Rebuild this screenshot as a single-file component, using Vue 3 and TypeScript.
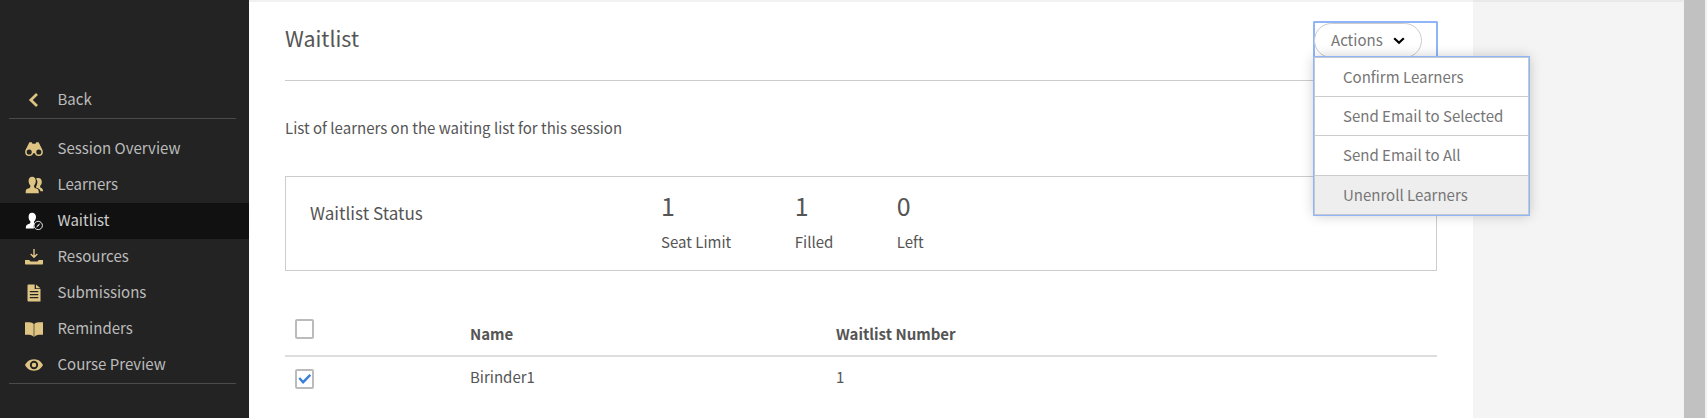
<script setup lang="ts">
import { ref } from 'vue'

interface NavItem {
  label: string
  icon: string
}

const navItems: NavItem[] = [
  { label: 'Session Overview', icon: 'binoculars' },
  { label: 'Learners', icon: 'users' },
  { label: 'Waitlist', icon: 'waiting' },
  { label: 'Resources', icon: 'download' },
  { label: 'Submissions', icon: 'document' },
  { label: 'Reminders', icon: 'book' },
  { label: 'Course Preview', icon: 'eye' },
]
const active = ref('Waitlist')

const stats = [
  { label: 'Seat Limit', value: 1 },
  { label: 'Filled', value: 1 },
  { label: 'Left', value: 0 },
]

const actions = ['Confirm Learners', 'Send Email to Selected', 'Send Email to All', 'Unenroll Learners']
const hovered = ref('Unenroll Learners')

const learners = ref([{ name: 'Birinder1', number: 1, selected: true }])
</script>

<template>
  <div class="page">
    <nav class="sidebar">
      <a class="nav-row back">
        <svg class="icon" viewBox="0 0 18 18"><path d="M12 3 5.800 9l6.200 6" fill="none" stroke="currentColor" stroke-width="2.700" /></svg>
        <span>Back</span>
      </a>
      <div class="nav-list">
        <a
          v-for="item in navItems"
          :key="item.label"
          class="nav-row"
          :class="{ active: item.label === active }"
          @click="active = item.label"
        >
          <svg class="icon" viewBox="0 0 18 18" fill="currentColor">
            <g v-if="item.icon === 'binoculars'">
              <path d="M4.400 2.200h2.300l.8 1.600h3l.8-1.600h2.300l1 2 2.600 5.400-3 .4-2.600 1.600-1.200 1.600h-2.800l-1.200-1.600L3.800 10l-3-.4 2.600-5.400z" />
              <circle cx="4.200" cy="12" r="3.300" fill="#232323" stroke="currentColor" stroke-width="1.500" />
              <circle cx="13.800" cy="12" r="3.300" fill="#232323" stroke="currentColor" stroke-width="1.500" />
            </g>
            <g v-else-if="item.icon === 'users'">
              <path d="M7.200.8c2.400 0 3.600 1.700 3.600 4 0 2.200-.7 3.500-1.700 4.600-.4 2 .5 2.500 2.400 3.200 1.700.6 2.300 1.300 2.300 4.600H.7c0-3.300.6-4 2.300-4.600 1.900-.7 2.700-1.200 2.300-3.200-1-1.100-1.700-2.400-1.700-4.600 0-2.300 1.200-4 3.600-4z" />
              <path d="M11 2.500c3.700-1.200 5.800.3 5.800 3.400 0 1.700-.6 2.800-1.600 3.800-.3 1.500.4 2 1.500 2.500.9.4 1.300 1.300 1.300 3h-2.500c-.4-1.800-1.500-2.700-4.500-3.700 0-1 .2-1.300.6-2 1.100-2.200 1.300-4.800-.6-7z" />
            </g>
            <g v-else-if="item.icon === 'waiting'">
              <path d="M7 .8c2.500 0 4 1.700 4 4.200 0 2.100-.8 3.400-1.900 4.500-.3 1.300 0 1.700.4 2.100-1 1.400-1 3.200-.5 5H.8c0-3 .7-3.800 2.300-4.400 2-.7 2.700-1.100 2.200-3C4.200 8.100 3.600 6.900 3.600 4.900 3.600 2.400 4.800.8 7 .8z" />
              <circle cx="13.200" cy="13.500" r="4.200" fill="#111" stroke="currentColor" stroke-width=".9" />
              <path d="m11 15.700 1.700-2.600 2.700-2-1.700 2.700z" />
            </g>
            <g v-else-if="item.icon === 'download'">
              <path d="M9 1v8M5.700 6 9 9.300 12.300 6" fill="none" stroke="currentColor" stroke-width="1.400" />
              <path d="M0 11.900h4.200l1.300 1.600h7l1.300-1.600H18v3.500q0 1.200-1.200 1.200H1.200Q0 16.600 0 15.400z" />
            </g>
            <g v-else-if="item.icon === 'document'">
              <path d="M3.500.5h6.200v4.600h5.800v12.400H3.500q-1 0-1-1v-15q0-1 1-1z" />
              <path d="m11 .6 4.400 3.600H11z" />
              <path d="M4.800 7.600h8.500M4.800 10.600h8.500M4.800 13.600h8.500" fill="none" stroke="#232323" stroke-width="1.100" />
            </g>
            <g v-else-if="item.icon === 'book'">
              <path d="M0 2.300h4.500q3 0 4.100 1.500v13q-1-1.700-4.300-2H0zM18 2.300h-4.500q-3 0-4.100 1.500v13q1-1.700 4.300-2H18z" />
              <path d="M8.600 4h.8v12.800h-.8z" opacity=".55" />
            </g>
            <g v-else>
              <path d="M9 3.300c4.700 0 7.600 2.900 9 5.700-1.400 2.800-4.300 5.700-9 5.700S1.400 11.800 0 9c1.400-2.800 4.300-5.700 9-5.700z" />
              <circle cx="9" cy="9" r="3.200" fill="currentColor" stroke="#232323" stroke-width="1.900" />
            </g>
          </svg>
          <span>{{ item.label }}</span>
        </a>
      </div>
    </nav>

    <main class="main">
      <header class="heading">
        <h1>Waitlist</h1>
        <div class="dropdown">
          <button class="trigger" type="button">
            <span>Actions</span>
            <svg class="caret" viewBox="0 0 12 8"><path d="m1.200 1.200 4.800 4.600 4.800-4.600" fill="none" stroke="#000" stroke-width="2.200" /></svg>
          </button>
          <ul class="menu">
            <li v-for="action in actions" :key="action" :class="{ hover: action === hovered }" @mouseenter="hovered = action">
              {{ action }}
            </li>
          </ul>
        </div>
      </header>

      <p class="intro">List of learners on the waiting list for this session</p>

      <section class="status">
        <h2>Waitlist Status</h2>
        <div v-for="stat in stats" :key="stat.label" class="stat">
          <span class="value">{{ stat.value }}</span>
          <span class="label">{{ stat.label }}</span>
        </div>
      </section>

      <div class="table">
        <div class="row head">
          <span class="cell"><i class="check" /></span>
          <span class="cell">Name</span>
          <span class="cell">Waitlist Number</span>
        </div>
        <div v-for="learner in learners" :key="learner.name" class="row">
          <span class="cell">
            <i class="check" @click="learner.selected = !learner.selected">
              <svg v-if="learner.selected" viewBox="0 0 14 14"><path d="m1.300 7 3.800 4.200 7.200-7.300" fill="none" stroke="#3b7fd6" stroke-width="2.400" /></svg>
            </i>
          </span>
          <span class="cell">{{ learner.name }}</span>
          <span class="cell">{{ learner.number }}</span>
        </div>
      </div>
    </main>

    <div class="gutter" />
    <div class="scrollbar"><div class="thumb" /></div>
  </div>
</template>

<style>
html,
body {
  overflow: hidden;
}
</style>

<style scoped>
* {
  box-sizing: border-box;
}

.page {
  display: flex;
  height: 418px;
  overflow: hidden;
  background: #f4f4f4;
  color: #555;
  font: 15.03px/24px 'Noto Sans CJK SC', 'Open Sans', sans-serif;
}

.sidebar {
  width: 249px;
  padding-top: 80px;
  background: #232323;
  color: #bbb;
}

.nav-row {
  display: flex;
  align-items: center;
  gap: 15px;
  height: 36px;
  padding-left: 25px;
}

.nav-row span {
  margin: 0 0 2px -0.5px;
}

.back {
  height: 39px;
  margin: 0 13px 12px 9px;
  padding-left: 16px;
  border-bottom: 1px solid #4b4b4b;
}

.back span {
  margin-bottom: 0;
}

.nav-list::after {
  content: '';
  display: block;
  height: 1px;
  margin: 0 13px 0 9px;
  background: #4b4b4b;
}

.icon {
  width: 18px;
  height: 18px;
  color: #dfc584;
}

.back .icon {
  margin-top: 2px;
}

.active {
  background: #111;
  color: #ccc;
}

.active .icon {
  color: #fff;
}

.main {
  width: 1224px;
  padding: 0 36px;
  border-top: 2px solid #f1f1f1;
  background: #fff;
}

.heading {
  display: flex;
  justify-content: space-between;
  height: 79px;
  padding-top: 19px;
  border-bottom: 1px solid #ccc;
}

h1 {
  margin: 0;
  font-size: 21.4px;
  font-weight: 400;
  line-height: 34px;
}

.dropdown {
  position: relative;
  z-index: 1;
  width: 125px;
  height: 38px;
  margin-right: -1px;
  border: 2px solid #8fb4f7;
  border-bottom: 0;
  border-radius: 2px 2px 0 0;
  color: #767676;
}

.trigger {
  display: flex;
  align-items: center;
  gap: 10px;
  width: 108px;
  height: 35px;
  margin-left: -1px;
  padding: 0 0 2px 16px;
  border: 1px solid #ccc;
  border-radius: 18px;
  background: #fff;
  color: inherit;
  font: inherit;
}

.caret {
  width: 12px;
  height: 8px;
  margin-top: 3px;
}

.menu {
  position: absolute;
  top: 34px;
  left: -1px;
  width: 215px;
  margin: 0;
  padding: 0;
  border: 1px solid #c4c8d0;
  outline: 1px solid #8fb4f7;
  background: #fff;
  box-shadow: 0 0 12px rgba(0, 0, 0, 0.22);
  list-style: none;
}

.menu li {
  height: 39px;
  padding-left: 28px;
  border-bottom: 1px solid #ccc;
  line-height: 38px;
}

.menu li:nth-child(3) {
  height: 40px;
}

.menu li:last-child {
  height: 38px;
  border-bottom: 0;
}

.menu .hover {
  background: #eee;
}

.intro {
  height: 24px;
  margin: 35px 0 36px;
}

.status {
  display: flex;
  height: 95px;
  border: 1px solid #ccc;
}

h2 {
  width: 375px;
  margin: 0;
  padding: 24px 0 0 24px;
  font-size: 17.1px;
  font-weight: 400;
  line-height: 24px;
}

.stat {
  display: flex;
  flex-direction: column;
  padding-top: 12px;
  margin-right: 63.5px;
}

.value {
  font-size: 25px;
  line-height: 32px;
}

.label {
  margin-top: 9px;
}

.table {
  margin-top: 40px;
}

.row {
  display: grid;
  grid-template-columns: 185px 366px 1fr;
  align-items: start;
  padding-top: 8px;
}

.head {
  height: 46px;
  padding-top: 11px;
  border-bottom: 2px solid #ddd;
  font-weight: 700;
}

.check {
  display: block;
  width: 19px;
  height: 20px;
  margin: 4px 0 0 10px;
  padding: 0 1px;
  border: 2px solid #bbb;
  border-radius: 2px;
}

.head .check {
  margin-top: -3px;
}

.check svg {
  display: block;
  width: 14px;
  height: 14px;
}

.gutter {
  flex: 1;
  border-top: 2px solid #e9e9e9;
}

.scrollbar {
  width: 24px;
  padding: 0 2px 0 1px;
  background: #f1f1f1;
}

.thumb {
  height: 100%;
  background: #c1c1c1;
}
</style>
